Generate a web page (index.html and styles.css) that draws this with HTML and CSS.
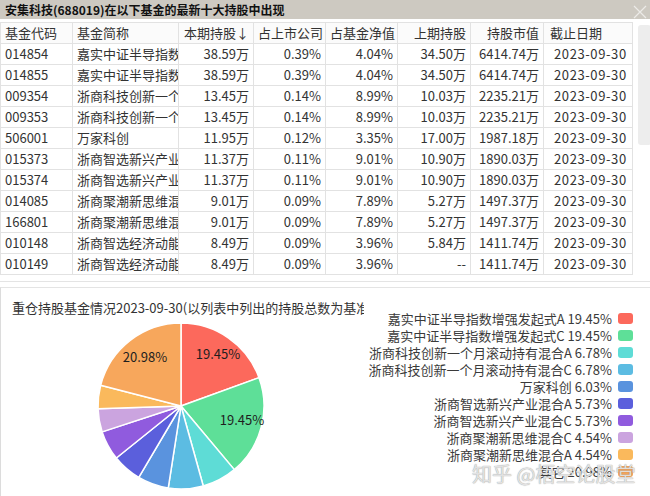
FILE: index.html
```html
<!DOCTYPE html>
<html lang="zh">
<head>
<meta charset="utf-8">
<title>安集科技</title>
<link rel="stylesheet" href="styles.css">
</head>
<body>
<div class="titlebar">
  <span class="title">安集科技(688019)在以下基金的最新十大持股中出现</span>
  <svg class="close" width="14" height="14" viewBox="0 0 14 14"><path d="M1 1 L13 13 M13 1 L1 13" stroke="#ecebe8" stroke-width="1.2" fill="none"/></svg>
</div>
<div class="grid">
  <table class="tbl">
    <colgroup>
      <col class="c1"><col class="c2"><col class="c3"><col class="c4"><col class="c5"><col class="c6"><col class="c7"><col class="c8">
    </colgroup>
    <thead>
      <tr><th class="l">基金代码</th><th class="l">基金简称</th><th>本期持股↓</th><th>占上市公司</th><th>占基金净值</th><th>上期持股</th><th>持股市值</th><th class="l d">截止日期</th></tr>
    </thead>
    <tbody>
      <tr><td class="l">014854</td><td class="l">嘉实中证半导指数增强发起式A</td><td>38.59万</td><td>0.39%</td><td>4.04%</td><td>34.50万</td><td>6414.74万</td><td class="l d">2023-09-30</td></tr>
      <tr><td class="l">014855</td><td class="l">嘉实中证半导指数增强发起式C</td><td>38.59万</td><td>0.39%</td><td>4.04%</td><td>34.50万</td><td>6414.74万</td><td class="l d">2023-09-30</td></tr>
      <tr><td class="l">009354</td><td class="l">浙商科技创新一个月滚动持有混合C</td><td>13.45万</td><td>0.14%</td><td>8.99%</td><td>10.03万</td><td>2235.21万</td><td class="l d">2023-09-30</td></tr>
      <tr><td class="l">009353</td><td class="l">浙商科技创新一个月滚动持有混合A</td><td>13.45万</td><td>0.14%</td><td>8.99%</td><td>10.03万</td><td>2235.21万</td><td class="l d">2023-09-30</td></tr>
      <tr><td class="l">506001</td><td class="l">万家科创</td><td>11.95万</td><td>0.12%</td><td>3.35%</td><td>17.00万</td><td>1987.18万</td><td class="l d">2023-09-30</td></tr>
      <tr><td class="l">015373</td><td class="l">浙商智选新兴产业混合A</td><td>11.37万</td><td>0.11%</td><td>9.01%</td><td>10.90万</td><td>1890.03万</td><td class="l d">2023-09-30</td></tr>
      <tr><td class="l">015374</td><td class="l">浙商智选新兴产业混合C</td><td>11.37万</td><td>0.11%</td><td>9.01%</td><td>10.90万</td><td>1890.03万</td><td class="l d">2023-09-30</td></tr>
      <tr><td class="l">014085</td><td class="l">浙商聚潮新思维混合C</td><td>9.01万</td><td>0.09%</td><td>7.89%</td><td>5.27万</td><td>1497.37万</td><td class="l d">2023-09-30</td></tr>
      <tr><td class="l">166801</td><td class="l">浙商聚潮新思维混合A</td><td>9.01万</td><td>0.09%</td><td>7.89%</td><td>5.27万</td><td>1497.37万</td><td class="l d">2023-09-30</td></tr>
      <tr><td class="l">010148</td><td class="l">浙商智选经济动能混合A</td><td>8.49万</td><td>0.09%</td><td>3.96%</td><td>5.84万</td><td>1411.74万</td><td class="l d">2023-09-30</td></tr>
      <tr><td class="l">010149</td><td class="l">浙商智选经济动能混合C</td><td>8.49万</td><td>0.09%</td><td>3.96%</td><td>--</td><td>1411.74万</td><td class="l d">2023-09-30</td></tr>
    </tbody>
  </table>
  <div class="scroll"><div class="thumb"></div></div>
</div>
<div class="chart">
  <div class="ctitle">重仓持股基金情况2023-09-30(以列表中列出的持股总数为基准)</div>
  <svg class="pie" width="370" height="214" viewBox="0 0 370 214">
    <g stroke="#ffffff" stroke-width="1.5" stroke-linejoin="round">
      <path d="M180 118 L180 35 A83 83 0 0 1 258.00 89.64 Z" fill="#fc695c"/>
      <path d="M180 118 L258.00 89.64 A83 83 0 0 1 233.31 181.61 Z" fill="#5edf98"/>
      <path d="M180 118 L233.31 181.61 A83 83 0 0 1 202.25 197.96 Z" fill="#5edcd6"/>
      <path d="M180 118 L202.25 197.96 A83 83 0 0 1 167.22 200.01 Z" fill="#5cbce2"/>
      <path d="M180 118 L167.22 200.01 A83 83 0 0 1 137.79 189.47 Z" fill="#5a93de"/>
      <path d="M180 118 L137.79 189.47 A83 83 0 0 1 115.33 170.02 Z" fill="#5b5fdc"/>
      <path d="M180 118 L115.33 170.02 A83 83 0 0 1 101.14 143.90 Z" fill="#905bde"/>
      <path d="M180 118 L101.14 143.90 A83 83 0 0 1 97.04 120.66 Z" fill="#cba4df"/>
      <path d="M180 118 L97.04 120.66 A83 83 0 0 1 99.65 97.21 Z" fill="#fab95c"/>
      <path d="M180 118 L99.65 97.21 A83 83 0 0 1 180 35 Z" fill="#f7a75c"/>
    </g>
    <g class="plabel" text-anchor="middle">
      <text x="217" y="71">19.45%</text>
      <text x="241" y="137">19.45%</text>
      <text x="144" y="74">20.98%</text>
    </g>
  </svg>
  <ul class="legend">
    <li>嘉实中证半导指数增强发起式A 19.45%<i class="sw" style="background:#fc695c"></i></li>
    <li>嘉实中证半导指数增强发起式C 19.45%<i class="sw" style="background:#5edf98"></i></li>
    <li>浙商科技创新一个月滚动持有混合A 6.78%<i class="sw" style="background:#5edcd6"></i></li>
    <li>浙商科技创新一个月滚动持有混合C 6.78%<i class="sw" style="background:#5cbce2"></i></li>
    <li>万家科创 6.03%<i class="sw" style="background:#5a93de"></i></li>
    <li>浙商智选新兴产业混合A 5.73%<i class="sw" style="background:#5b5fdc"></i></li>
    <li>浙商智选新兴产业混合C 5.73%<i class="sw" style="background:#905bde"></i></li>
    <li>浙商聚潮新思维混合C 4.54%<i class="sw" style="background:#cba4df"></i></li>
    <li>浙商聚潮新思维混合A 4.54%<i class="sw" style="background:#fab95c"></i></li>
    <li>其它 20.98%<i class="sw" style="background:#f7a75c"></i></li>
  </ul>
  <div class="watermark">知乎 @梧空论股堂</div>
</div>
</body>
</html>
```
FILE: styles.css
```css
html, body {
  margin: 0;
  padding: 0;
  background: #ffffff;
}
body {
  width: 650px;
  height: 496px;
  overflow: hidden;
  font-family: "Noto Sans CJK SC", "Noto Sans", sans-serif;
  color: #333333;
}
.titlebar {
  height: 19px;
  background: #cdc9c1;
  display: flex;
  align-items: center;
  justify-content: space-between;
  padding: 0 3px 0 5px;
}
.title {
  font-size: 12px;
  font-weight: bold;
  color: #111111;
  line-height: 19px;
  white-space: nowrap;
}
.close {
  display: block;
  margin-top: 4px;
}
.grid {
  display: flex;
  margin-top: 3px;
  height: 259px;
  border-bottom: 1px solid #e4e4e4;
}
.tbl {
  width: 632px;
  table-layout: fixed;
  border-collapse: collapse;
  font-size: 13px;
  align-self: flex-start;
}
.c1 { width: 72px; }
.c2 { width: 106px; }
.c3 { width: 75px; }
.c4 { width: 72px; }
.c5 { width: 72px; }
.c6 { width: 73px; }
.c7 { width: 73px; }
.c8 { width: 89px; }
.tbl th, .tbl td {
  height: 20px;
  padding: 0 4px 0 4px;
  border: 1px solid #e2e2e2;
  white-space: nowrap;
  overflow: hidden;
  text-overflow: clip;
  text-align: right;
  font-weight: normal;
  line-height: 20px;
  color: #333333;
}
.tbl th {
  background: #fbfbfb;
}
.tbl .l {
  text-align: left;
}
.tbl th.d {
  padding-left: 6px;
  padding-right: 0;
}
.tbl td.d {
  padding-left: 10px;
  padding-right: 0;
  letter-spacing: 0.6px;
}
.scroll {
  width: 18px;
  flex: none;
}
.thumb {
  margin: 3px 0 0 5px;
  width: 13px;
  height: 120px;
  background: #ededed;
  border-radius: 3px;
}
.chart {
  position: relative;
  margin-top: 5px;
  height: 214px;
  border-top: 1px solid #e4e4e4;
  border-left: 1px solid #dcdcdc;
}
.ctitle {
  position: relative;
  z-index: 1;
  margin-left: 11px;
  padding-top: 11px;
  width: 352px;
  font-size: 13px;
  line-height: 18px;
  white-space: nowrap;
  overflow: hidden;
  color: #333333;
}
.pie {
  position: absolute;
  left: 0;
  top: 0;
}
.plabel text {
  font-family: "Noto Sans CJK SC", "Noto Sans", sans-serif;
  font-size: 13px;
  fill: #1e1e1e;
}
.legend {
  position: absolute;
  right: 17px;
  top: 22px;
  margin: 0;
  padding: 0;
  list-style: none;
  font-size: 13px;
  line-height: 17px;
  color: #3a3a3a;
  z-index: 2;
}
.legend li {
  display: flex;
  justify-content: flex-end;
  align-items: center;
  white-space: nowrap;
}
.sw {
  display: inline-block;
  width: 15px;
  height: 11px;
  border-radius: 3px;
  margin-left: 6px;
}
.watermark {
  position: absolute;
  left: 471px;
  top: 174px;
  font-size: 20px;
  line-height: 24px;
  white-space: nowrap;
  color: rgba(240, 240, 240, 0.85);
  text-shadow: 0 0 1px rgba(110, 110, 110, 0.6), 0 0 1px rgba(110, 110, 110, 0.4);
  z-index: 3;
}
```
